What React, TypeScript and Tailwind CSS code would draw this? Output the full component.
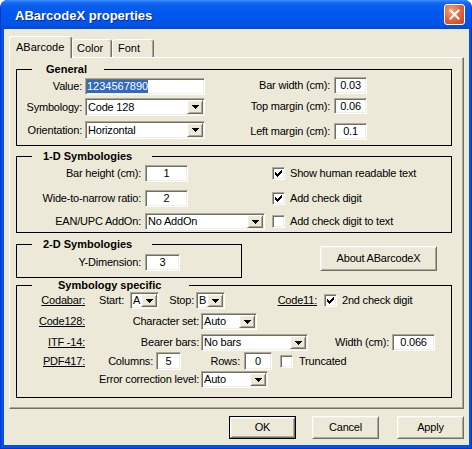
import React from "react";

const SUNKEN =
  "bg-white border border-t-[#ACA899] border-l-[#ACA899] border-b-white border-r-white shadow-[inset_1px_1px_0_#716F64,inset_-1px_-1px_0_#F1EFE2]";
const RAISED =
  "bg-[#ECE9D8] border border-t-white border-l-white border-b-[#716F64] border-r-[#716F64] shadow-[inset_1px_1px_0_#F1EFE2,inset_-1px_-1px_0_#ACA899]";

function Arrow() {
  return (
    <svg width="7" height="4" viewBox="0 0 7 4" shapeRendering="crispEdges">
      <path d="M0 0h7v1h-1v1h-1v1h-1v1h-1v-1h-1v-1h-1v-1h-1z" fill="#000" />
    </svg>
  );
}

function Edit({ className, children, left }: { className: string; children?: React.ReactNode; left?: boolean }) {
  return (
    <div
      className={`${SUNKEN} ${className} shrink-0 flex items-center whitespace-nowrap overflow-hidden ${
        left ? "justify-start pl-[1px]" : "justify-center"
      }`}
    >
      {children}
    </div>
  );
}

function Combo({ className, value }: { className: string; value: string }) {
  return (
    <div className={`${SUNKEN} ${className} shrink-0 flex items-stretch p-[1px]`}>
      <span className="flex-1 flex items-center pl-[1px] overflow-hidden whitespace-nowrap">{value}</span>
      <span className={`${RAISED} w-[16px] shrink-0 flex items-center justify-center`}>
        <Arrow />
      </span>
    </div>
  );
}

function Check({ checked, className = "" }: { checked?: boolean; className?: string }) {
  return (
    <div className={`${SUNKEN} ${className} w-[13px] h-[13px] shrink-0 flex items-center justify-center`}>
      {checked && (
        <svg width="7" height="7" viewBox="0 0 7 7" shapeRendering="crispEdges">
          <path
            d="M6 0h1v1h-1zM5 1h2v1h-2zM0 2h1v1h-1zM4 2h3v1h-3zM0 3h2v1h-2zM3 3h3v1h-3zM0 4h5v1h-5zM1 5h3v1h-3zM2 6h1v1h-1z"
            fill="#000"
          />
        </svg>
      )}
    </div>
  );
}

function Btn({ className, children, def }: { className: string; children: React.ReactNode; def?: boolean }) {
  if (def) {
    return (
      <div className={`${className} shrink-0 border border-black flex`}>
        <div className={`${RAISED} flex-1 flex items-center justify-center`}>{children}</div>
      </div>
    );
  }
  return <div className={`${RAISED} ${className} shrink-0 flex items-center justify-center`}>{children}</div>;
}

function Group({
  legend,
  legendClass,
  className,
  children,
}: {
  legend: string;
  legendClass: string;
  className: string;
  children: React.ReactNode;
}) {
  return (
    <div className={`relative border border-black ${className}`}>
      <span
        className={`absolute top-[-7px] bg-[#ECE9D8] font-bold leading-[13px] tracking-normal whitespace-nowrap ${legendClass}`}
      >
        {legend}
      </span>
      {children}
    </div>
  );
}

export default function App() {
  return (
    <div className="w-[472px] h-[449px] bg-white font-['Liberation_Sans',Arial,sans-serif] text-[11px] tracking-[-0.2px] leading-[13px] text-black">
      <div className="w-[472px] h-[449px] flex flex-col rounded-t-[8px] overflow-hidden bg-[#0054E3] border-x border-b border-[#0831D9]">
        {/* Title bar */}
        <div className="h-[29px] shrink-0 flex items-center bg-[linear-gradient(to_bottom,#3D8DFB_0%,#1C6EF5_8%,#0A5EEC_18%,#0058EE_45%,#0055E8_80%,#0049D8_100%)]">
          <span className="pl-[14px] mt-[2px] font-bold text-[13px] tracking-normal text-white [text-shadow:1px_1px_0_#0B2A9A]">
            ABarcodeX properties
          </span>
          <div className="ml-auto mr-[6px] w-[21px] h-[21px] rounded-[3px] border border-white bg-[radial-gradient(circle_at_35%_30%,#F2A48A_0%,#E2643F_50%,#C4401C_100%)] flex items-center justify-center">
            <svg width="11" height="11" viewBox="0 0 11 11">
              <path d="M1.5 1.5L9.5 9.5M9.5 1.5L1.5 9.5" stroke="#fff" strokeWidth="2" strokeLinecap="square" />
            </svg>
          </div>
        </div>

        {/* Body */}
        <div className="flex-1 ml-[3px] mr-[2px] mb-[3px] bg-[#ECE9D8] pl-[5px] pr-[5px] pt-[7px] flex flex-col">
          {/* Tabs */}
          <div className="flex items-end h-[21px]">
            <div className="relative z-10 w-[63px] h-[22px] -mb-[1px] bg-[#ECE9D8] border-t border-l border-r border-t-white border-l-white border-r-[#716F64] shadow-[inset_-1px_0_0_#ACA899] rounded-t-[3px] pl-[6px] tracking-normal flex items-center">
              ABarcode
            </div>
            <div className="w-[40px] h-[18px] bg-[#ECE9D8] border-t border-l border-r border-t-white border-l-white border-r-[#716F64] shadow-[inset_-1px_0_0_#ACA899] rounded-t-[3px] pl-[4px] tracking-normal flex items-center">
              Color
            </div>
            <div className="w-[42px] h-[18px] bg-[#ECE9D8] border-t border-l border-r border-t-white border-l-white border-r-[#716F64] shadow-[inset_-1px_0_0_#ACA899] rounded-t-[3px] pl-[5px] tracking-normal flex items-center">
              Font
            </div>
          </div>

          {/* Panel */}
          <div className="w-[455px] h-[352px] shrink-0 border border-t-white border-l-white border-b-[#716F64] border-r-[#716F64] shadow-[inset_-1px_-1px_0_#ACA899] pl-[6px] pt-[11px]">
            {/* General */}
            <Group legend="General" legendClass="left-[15px] w-[72px] pl-[14px]" className="w-[436px] h-[77px]">
              <div className="flex">
                <div className="flex flex-col">
                  <div className="mt-[8px] h-[17px] flex items-center">
                    <span className="w-[65px] text-right whitespace-nowrap">Value:</span>
                    <Edit className="ml-[3px] w-[120px] h-[17px] tracking-normal" left>
                      <span className="bg-[#316AC5] text-white">1234567890</span>
                    </Edit>
                  </div>
                  <div className="mt-[3px] h-[18px] flex items-center">
                    <span className="w-[65px] text-right whitespace-nowrap">Symbology:</span>
                    <Combo className="ml-[3px] w-[120px] h-[18px]" value="Code 128" />
                  </div>
                  <div className="mt-[5px] h-[18px] flex items-center">
                    <span className="w-[65px] text-right whitespace-nowrap">Orientation:</span>
                    <Combo className="ml-[3px] w-[120px] h-[18px]" value="Horizontal" />
                  </div>
                </div>
                <div className="ml-[25px] flex flex-col">
                  <div className="mt-[7px] h-[17px] flex items-center">
                    <span className="w-[100px] text-right whitespace-nowrap">Bar width (cm):</span>
                    <Edit className="ml-[4px] w-[33px] h-[17px]">0.03</Edit>
                  </div>
                  <div className="mt-[4px] h-[16px] flex items-center">
                    <span className="w-[100px] text-right whitespace-nowrap">Top margin (cm):</span>
                    <Edit className="ml-[4px] w-[33px] h-[16px]">0.06</Edit>
                  </div>
                  <div className="mt-[9px] h-[17px] flex items-center">
                    <span className="w-[100px] text-right whitespace-nowrap">Left margin (cm):</span>
                    <Edit className="ml-[4px] w-[33px] h-[17px]">0.1</Edit>
                  </div>
                </div>
              </div>
            </Group>

            {/* 1-D */}
            <Group
              legend="1-D Symbologies"
              legendClass="left-[15px] w-[120px] pl-[11px]"
              className="mt-[10px] w-[436px] h-[77px]"
            >
              <div className="mt-[8px] h-[17px] flex items-center">
                <div className="w-[248px] flex items-center">
                  <span className="w-[124px] text-right whitespace-nowrap">Bar height (cm):</span>
                  <Edit className="ml-[4px] w-[43px] h-[17px]">1</Edit>
                </div>
                <Check className="ml-[7px]" checked />
                <span className="ml-[5px] whitespace-nowrap">Show human readable text</span>
              </div>
              <div className="mt-[8px] h-[17px] flex items-center">
                <div className="w-[248px] flex items-center">
                  <span className="w-[124px] text-right whitespace-nowrap">Wide-to-narrow ratio:</span>
                  <Edit className="ml-[4px] w-[43px] h-[17px]">2</Edit>
                </div>
                <Check className="ml-[7px]" checked />
                <span className="ml-[5px] whitespace-nowrap">Add check digit</span>
              </div>
              <div className="mt-[6px] h-[17px] flex items-center">
                <div className="w-[248px] flex items-center">
                  <span className="w-[124px] text-right whitespace-nowrap">EAN/UPC AddOn:</span>
                  <Combo className="ml-[4px] w-[120px] h-[17px]" value="No AddOn" />
                </div>
                <Check className="ml-[7px]" />
                <span className="ml-[5px] whitespace-nowrap">Add check digit to text</span>
              </div>
            </Group>

            {/* 2-D + About */}
            <div className="mt-[11px] flex items-start">
              <Group
                legend="2-D Symbologies"
                legendClass="left-[15px] w-[120px] pl-[11px]"
                className="w-[226px] h-[34px]"
              >
                <div className="mt-[9px] h-[17px] flex items-center">
                  <span className="w-[124px] text-right whitespace-nowrap">Y-Dimension:</span>
                  <Edit className="ml-[4px] w-[35px] h-[17px]">3</Edit>
                </div>
              </Group>
              <Btn className="ml-[78px] mt-[2px] w-[117px] h-[25px] whitespace-nowrap">About ABarcodeX</Btn>
            </div>

            {/* Symbology specific */}
            <Group
              legend="Symbology specific"
              legendClass="left-[15px] w-[157px] pl-[26px]"
              className="mt-[7px] w-[436px] h-[113px]"
            >
              <div className="mt-[6px] h-[17px] flex items-center">
                <span className="w-[68px] text-right whitespace-nowrap">
                  <span className="underline">Codabar:</span>
                </span>
                <span className="ml-[14px] w-[31px] whitespace-nowrap">Start:</span>
                <Combo className="w-[29px] h-[17px]" value="A" />
                <span className="w-[37px] text-right pr-[2px] whitespace-nowrap">Stop:</span>
                <Combo className="w-[29px] h-[17px]" value="B" />
                <span className="w-[99px] text-right pr-[7px] whitespace-nowrap">
                  <span className="underline">Code11:</span>
                </span>
                <Check checked />
                <span className="ml-[5px] whitespace-nowrap">2nd check digit</span>
              </div>
              <div className="mt-[4px] h-[17px] flex items-center">
                <span className="w-[68px] text-right whitespace-nowrap">
                  <span className="underline">Code128:</span>
                </span>
                <span className="w-[116px] text-right pr-[2px] whitespace-nowrap">Character set:</span>
                <Combo className="w-[56px] h-[17px]" value="Auto" />
              </div>
              <div className="mt-[4px] h-[17px] flex items-center">
                <span className="w-[68px] text-right whitespace-nowrap">
                  <span className="underline">ITF -14:</span>
                </span>
                <span className="w-[116px] text-right pr-[2px] whitespace-nowrap">Bearer bars:</span>
                <Combo className="w-[107px] h-[17px]" value="No bars" />
                <span className="w-[84px] text-right pr-[3px] whitespace-nowrap">Width (cm):</span>
                <Edit className="w-[43px] h-[17px]">0.066</Edit>
              </div>
              <div className="mt-[1px] h-[18px] flex items-center">
                <span className="w-[68px] text-right whitespace-nowrap">
                  <span className="underline">PDF417:</span>
                </span>
                <span className="w-[71px] text-right pr-[3px] whitespace-nowrap">Columns:</span>
                <Edit className="w-[25px] h-[18px]">5</Edit>
                <span className="w-[63px] text-right pr-[4px] whitespace-nowrap">Rows:</span>
                <Edit className="w-[28px] h-[18px]">0</Edit>
                <Check className="ml-[8px]" />
                <span className="ml-[6px] whitespace-nowrap">Truncated</span>
              </div>
              <div className="mt-[1px] h-[17px] flex items-center">
                <span className="w-[184px] text-right pr-[2px] whitespace-nowrap">Error correction level:</span>
                <Combo className="w-[67px] h-[17px]" value="Auto" />
              </div>
            </Group>
          </div>

          {/* Buttons */}
          <div className="mt-[7px] flex justify-end">
            <Btn className="w-[67px] h-[23px]" def>
              OK
            </Btn>
            <Btn className="ml-[16px] w-[67px] h-[23px]">Cancel</Btn>
            <Btn className="ml-[18px] w-[67px] h-[23px]">Apply</Btn>
          </div>
        </div>
      </div>
    </div>
  );
}
